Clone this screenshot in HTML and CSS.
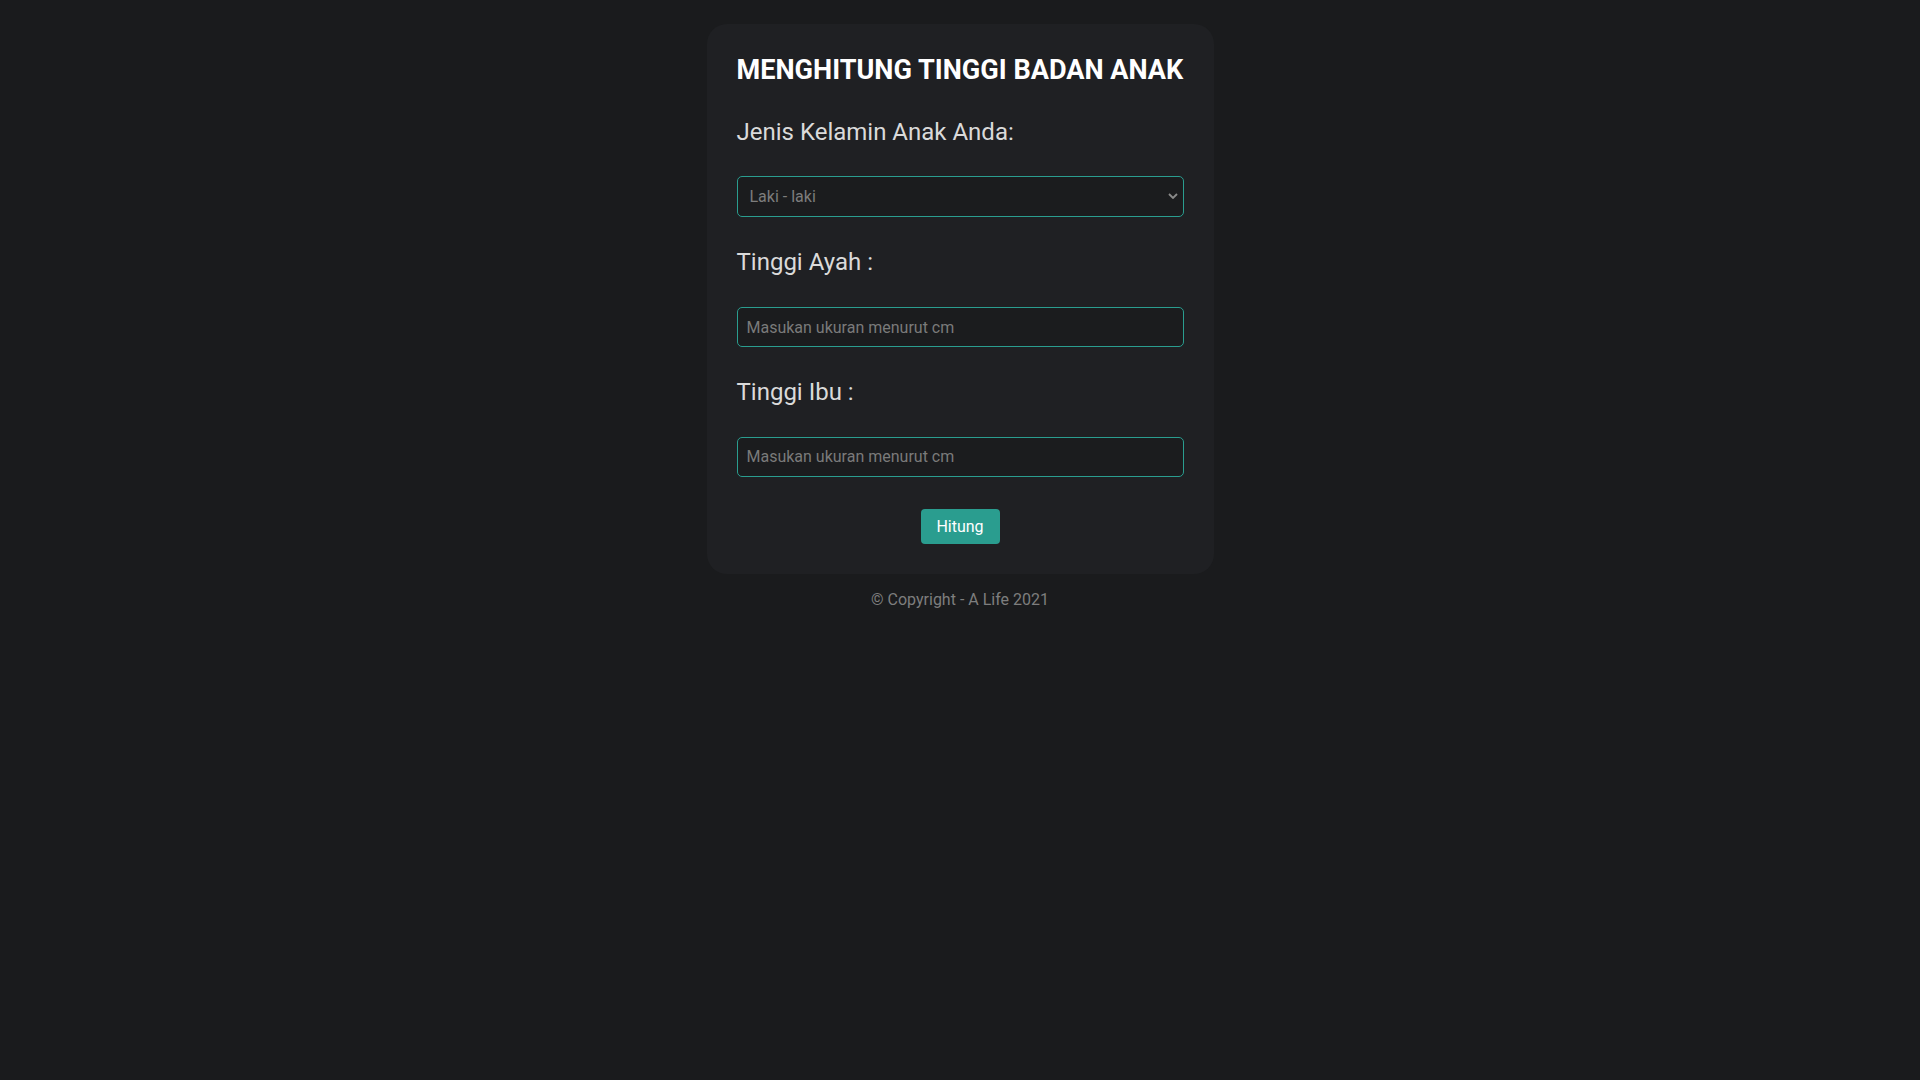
FILE: index.html
```html
<!DOCTYPE html>
<html lang="id">
<head>
<meta charset="utf-8">
<title>Menghitung Tinggi Badan Anak</title>
<link rel="stylesheet" href="styles.css">
</head>
<body>
<main class="card">
  <h1 class="title">MENGHITUNG TINGGI BADAN ANAK</h1>
  <label class="label" for="jk">Jenis Kelamin Anak Anda:</label>
  <div class="select-wrap">
    <select id="jk" class="field select">
      <option>Laki - laki</option>
      <option>Perempuan</option>
    </select>
    <svg class="chevron" width="10" height="6" viewBox="0 0 10 6"><path d="M1 1l4 4 4-4" fill="none" stroke="#8a8a8a" stroke-width="1.8"/></svg>
  </div>
  <label class="label" for="ayah">Tinggi Ayah :</label>
  <input id="ayah" class="field" type="text" placeholder="Masukan ukuran menurut cm">
  <label class="label" for="ibu">Tinggi Ibu :</label>
  <input id="ibu" class="field" type="text" placeholder="Masukan ukuran menurut cm">
  <div class="actions">
    <button class="btn" type="button">Hitung</button>
  </div>
</main>
<footer class="footer">© Copyright - A Life 2021</footer>
</body>
</html>
```
FILE: styles.css
```css
* { box-sizing: border-box; }
html, body { margin: 0; padding: 0; }
body {
  background: #1a1b1d;
  font-family: Roboto, "Liberation Sans", sans-serif;
  color: #dcdcdc;
  min-height: 100vh;
  padding-top: 24px;
}
.card {
  width: 507px;
  margin: 0 auto;
  background: #1f2023;
  border-radius: 20px;
  padding: 30px 30px 30px;
  display: flex;
  flex-direction: column;
}
.title {
  margin: 0 0 31px;
  font-size: 27.1px;
  line-height: 1.2;
  font-weight: 700;
  color: #ffffff;
  white-space: nowrap;
}
.label {
  font-size: 24px;
  line-height: 1.2;
  color: #dadada;
  margin: 0 0 30px;
}
.field {
  display: block;
  width: 100%;
  height: 40px;
  margin: 0 0 31px;
  background: #1b1c1e;
  border: 1px solid #2a9d8f;
  border-radius: 5px;
  color: #7d7d7d;
  font-family: Roboto, "Liberation Sans", sans-serif;
  font-size: 16px;
  padding: 0 9px;
  outline: none;
}
.field::placeholder { color: #7a7a7a; }
.select-wrap { position: relative; }
.select {
  appearance: none;
  -webkit-appearance: none;
  padding: 0 12px;
  height: 41px;
}
.chevron {
  position: absolute;
  right: 6px;
  top: 17px;
  pointer-events: none;
}
.actions {
  display: flex;
  justify-content: center;
  margin-top: 1px;
}
.btn {
  background: #2a9d8f;
  color: #ffffff;
  border: none;
  border-radius: 4px;
  font-family: Roboto, "Liberation Sans", sans-serif;
  font-size: 16px;
  width: 79px;
  height: 35px;
  padding: 0;
  cursor: pointer;
}
.footer {
  text-align: center;
  color: #7e7e7e;
  font-size: 16px;
  margin-top: 16px;
}
```
